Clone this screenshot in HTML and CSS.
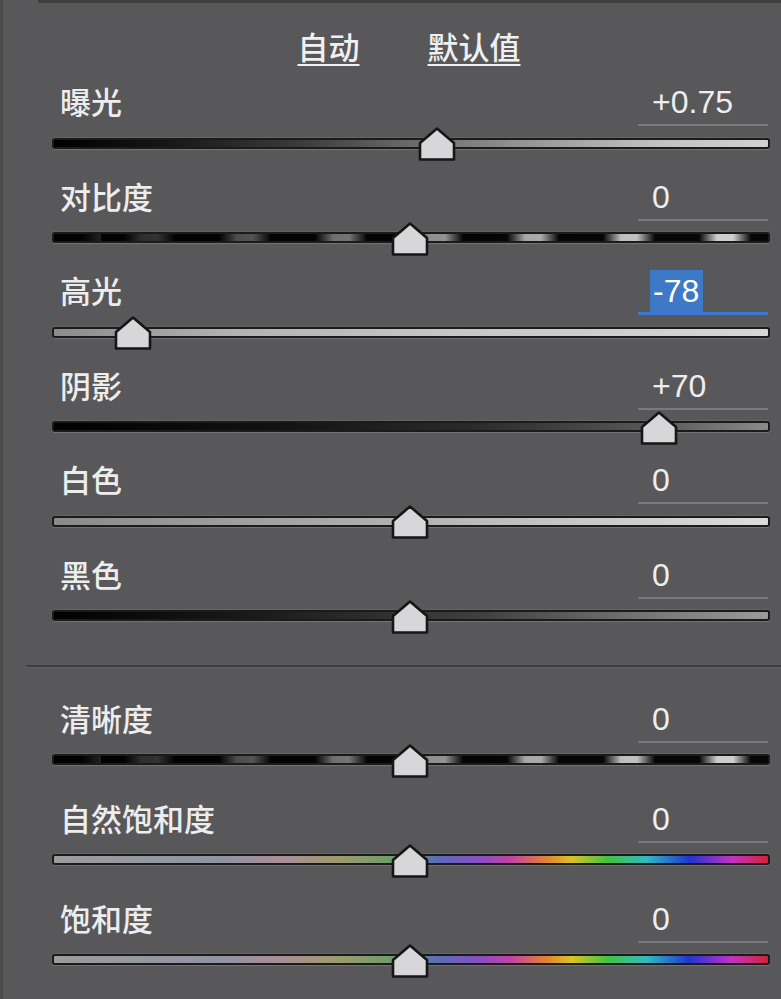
FILE: index.html
```html
<!DOCTYPE html>
<html lang="zh-CN">

<head>
    <meta charset="UTF-8">
    <meta name="viewport" content="width=device-width, initial-scale=1.0">
    <title>基本</title>
    <link rel="stylesheet" href="styles.css">
</head>

<body>
    <div class="topline"></div>
    <div class="panel">
        <div class="header">
            <a class="link">自动</a>
            <a class="link">默认值</a>
        </div>

        <div class="row">
            <div class="head">
                <div class="label">曝光</div>
                <div class="value">+0.75</div>
            </div>
            <div class="slider">
                <div class="track exposure"></div>
                <svg class="thumb" style="left: 53.6%" viewBox="0 0 37 34"><polygon points="18.5,1.5 35.5,16 35.5,32.5 1.5,32.5 1.5,16"/></svg>
            </div>
        </div>

        <div class="row">
            <div class="head">
                <div class="label">对比度</div>
                <div class="value">0</div>
            </div>
            <div class="slider">
                <div class="track contrast"></div>
                <svg class="thumb" style="left: 49.9%" viewBox="0 0 37 34"><polygon points="18.5,1.5 35.5,16 35.5,32.5 1.5,32.5 1.5,16"/></svg>
            </div>
        </div>

        <div class="row">
            <div class="head">
                <div class="label">高光</div>
                <div class="value active"><span class="sel">-78</span></div>
            </div>
            <div class="slider">
                <div class="track highlights"></div>
                <svg class="thumb" style="left: 11.3%" viewBox="0 0 37 34"><polygon points="18.5,1.5 35.5,16 35.5,32.5 1.5,32.5 1.5,16"/></svg>
            </div>
        </div>

        <div class="row">
            <div class="head">
                <div class="label">阴影</div>
                <div class="value">+70</div>
            </div>
            <div class="slider">
                <div class="track shadows"></div>
                <svg class="thumb" style="left: 84.5%" viewBox="0 0 37 34"><polygon points="18.5,1.5 35.5,16 35.5,32.5 1.5,32.5 1.5,16"/></svg>
            </div>
        </div>

        <div class="row">
            <div class="head">
                <div class="label">白色</div>
                <div class="value">0</div>
            </div>
            <div class="slider">
                <div class="track whites"></div>
                <svg class="thumb" style="left: 49.9%" viewBox="0 0 37 34"><polygon points="18.5,1.5 35.5,16 35.5,32.5 1.5,32.5 1.5,16"/></svg>
            </div>
        </div>

        <div class="row">
            <div class="head">
                <div class="label">黑色</div>
                <div class="value">0</div>
            </div>
            <div class="slider">
                <div class="track blacks"></div>
                <svg class="thumb" style="left: 49.9%" viewBox="0 0 37 34"><polygon points="18.5,1.5 35.5,16 35.5,32.5 1.5,32.5 1.5,16"/></svg>
            </div>
        </div>

        <div class="divider"></div>

        <div class="row tall">
            <div class="head">
                <div class="label">清晰度</div>
                <div class="value">0</div>
            </div>
            <div class="slider">
                <div class="track contrast"></div>
                <svg class="thumb" style="left: 49.9%" viewBox="0 0 37 34"><polygon points="18.5,1.5 35.5,16 35.5,32.5 1.5,32.5 1.5,16"/></svg>
            </div>
        </div>

        <div class="row tall">
            <div class="head">
                <div class="label">自然饱和度</div>
                <div class="value">0</div>
            </div>
            <div class="slider">
                <div class="track color"></div>
                <svg class="thumb" style="left: 49.9%" viewBox="0 0 37 34"><polygon points="18.5,1.5 35.5,16 35.5,32.5 1.5,32.5 1.5,16"/></svg>
            </div>
        </div>

        <div class="row tall">
            <div class="head">
                <div class="label">饱和度</div>
                <div class="value">0</div>
            </div>
            <div class="slider">
                <div class="track color"></div>
                <svg class="thumb" style="left: 49.9%" viewBox="0 0 37 34"><polygon points="18.5,1.5 35.5,16 35.5,32.5 1.5,32.5 1.5,16"/></svg>
            </div>
        </div>
    </div>
</body>

</html>
```

FILE: styles.css
```css
html,
body {
    margin: 0;
    height: 100%;
}

body {
    background-color: #58585a;
    border-left: 3px solid #4b4b4c;
    box-sizing: border-box;
    overflow: hidden;
    font-family: "Noto Sans CJK SC", sans-serif;
    color: #ececec;
}

.topline {
    height: 3px;
    margin-left: 35px;
    background-color: #3f3f40;
}

.panel {
    margin: 0 11px 0 49px;
    display: flex;
    flex-direction: column;
}

.header {
    height: 73px;
    box-sizing: border-box;
    padding-top: 12px;
    padding-right: 4px;
    display: flex;
    justify-content: center;
    align-items: center;
    gap: 68px;
}

.header>.link {
    font-size: 31px;
    font-weight: 500;
    line-height: 40px;
    color: #f0f0f0;
    text-decoration: underline;
    text-decoration-thickness: 2px;
    text-underline-offset: 5px;
}

.row {
    height: 94.6px;
    display: flex;
    flex-direction: column;
}

.row.tall {
    height: 100px;
}

.row>.head {
    height: 50px;
    display: flex;
    justify-content: space-between;
    align-items: stretch;
}

.row>.head>.label {
    padding-left: 8px;
    font-size: 31px;
    font-weight: 500;
    line-height: 50px;
    color: #ededed;
}

.row>.head>.value {
    width: 130px;
    margin-right: 2px;
    box-sizing: border-box;
    padding-left: 14px;
    border-bottom: 2px solid #7a7a7b;
    font-family: "Liberation Sans", Arial, sans-serif;
    font-size: 32px;
    line-height: 52px;
    color: #eeeeee;
}

.row>.head>.value.active {
    padding-left: 12px;
    border-bottom: 3px solid #3b78cf;
}

.sel {
    display: inline-block;
    padding: 0 4px 0 3px;
    line-height: 42px;
    background-color: #3d79c6;
    color: #ffffff;
}

.slider {
    position: relative;
    height: 34px;
    display: flex;
    align-items: center;
}

.track {
    flex: 1;
    height: 7px;
    border: 2px solid #1b1b1b;
    border-radius: 3px;
    box-shadow: 0 1px 1px rgba(255, 255, 255, 0.18), 0 -1px 1px rgba(255, 255, 255, 0.08);
}

.track.exposure {
    background: linear-gradient(to right, #000000 0%, #151515 15%, #3c3c3c 35%, #6a6a6a 50%, #9a9a9a 68%, #c2c2c2 85%, #d2d2d2 100%);
}

.track.contrast {
    background:
        linear-gradient(to right, rgba(0, 0, 0, 0.92) 0%, rgba(0, 0, 0, 0.7) 20%, rgba(0, 0, 0, 0.35) 50%, rgba(0, 0, 0, 0.1) 80%, rgba(0, 0, 0, 0) 100%),
        repeating-linear-gradient(to right, #060606 0px, #060606 22px, #d4d4d4 40px, #d4d4d4 56px, #060606 74px, #060606 96px);
    background-position: 0 0, 47px 0;
}

.track.highlights {
    background: linear-gradient(to right, #8c8c8c 0%, #b2b2b2 25%, #c6c6c6 55%, #d6d6d6 100%);
}

.track.shadows {
    background: linear-gradient(to right, #000000 0%, #111111 30%, #2c2c2c 60%, #5a5a5a 85%, #8a8a8a 100%);
}

.track.whites {
    background: linear-gradient(to right, #8a8a8a 0%, #a6a6a6 35%, #c4c4c4 70%, #dcdcdc 100%);
}

.track.blacks {
    background: linear-gradient(to right, #000000 0%, #1c1c1c 30%, #404040 60%, #7a7a7a 85%, #9a9a9a 100%);
}

.track.color {
    background: linear-gradient(to right, #9c9c9c 0%, #8f94a2 23%, #aa8c98 32%, #9c9a6c 40%, #6c9c6c 47.5%, #5a6cb8 54%, #8c4cc2 60%, #c442a2 64%, #e28232 69%, #dac422 72.5%, #42c242 77.5%, #30bac4 83%, #2234d2 89%, #c432c2 95%, #d42232 100%);
}

.thumb {
    position: absolute;
    top: 1px;
    width: 37px;
    height: 34px;
    transform: translateX(-50%);
    overflow: visible;
}

.thumb>polygon {
    fill: #d7d7d9;
    stroke: #161616;
    stroke-width: 2.6;
    stroke-linejoin: round;
}

.divider {
    height: 2px;
    margin: 21px -11px 26.4px -26px;
    background-color: #3d3d3e;
    box-shadow: 0 1px 0 rgba(255, 255, 255, 0.06);
}
```
